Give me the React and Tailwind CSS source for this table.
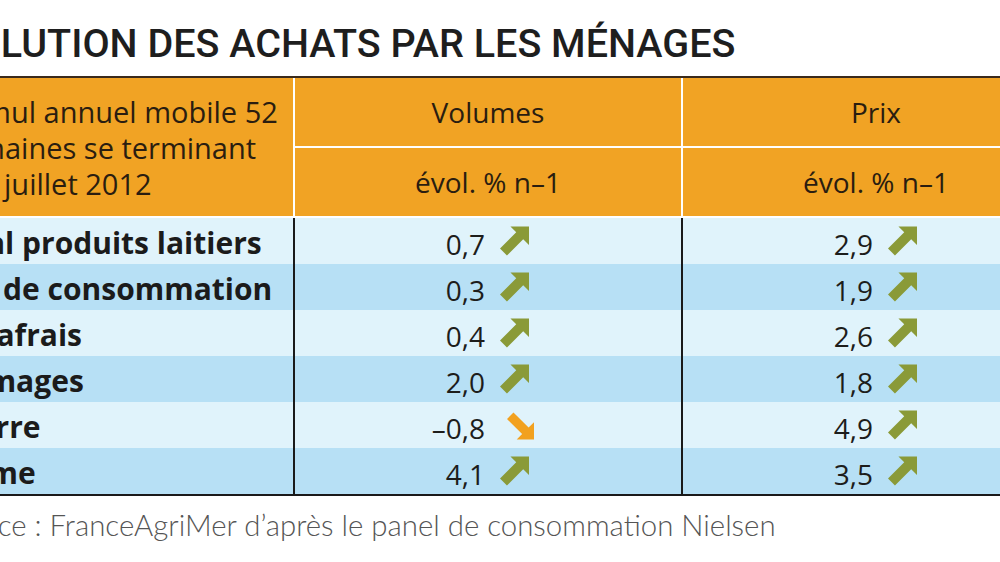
import React from "react";

const rows = [
  { label: "Total produits laitiers", vol: "0,7", volUp: true, prix: "2,9", prixUp: true },
  { label: "Lait de consommation", vol: "0,3", volUp: true, prix: "1,9", prixUp: true },
  { label: "Ultrafrais", vol: "0,4", volUp: true, prix: "2,6", prixUp: true },
  { label: "Fromages", vol: "2,0", volUp: true, prix: "1,8", prixUp: true },
  { label: "Beurre", vol: "–0,8", volUp: false, prix: "4,9", prixUp: true },
  { label: "Crème", vol: "4,1", volUp: true, prix: "3,5", prixUp: true },
];

function Arrow({ up }) {
  // thick diagonal arrow: green up, orange down
  if (up) {
    return (
      <svg viewBox="0 0 100 100" className="w-[29px] h-[30px] shrink-0">
        <polygon
          points="36,0 100,0 100,64 80,44 24,100 0,76 56,20"
          fill="#8a9a38"
        />
      </svg>
    );
  }
  return (
    <svg viewBox="0 0 100 100" className="w-[27px] h-[28px] shrink-0">
      <polygon
        points="36,100 100,100 100,36 80,56 24,0 0,24 56,80"
        fill="#f2a11f"
      />
    </svg>
  );
}

function ValueCell({ value, up, bg }) {
  return (
    <div className={`${bg} flex items-center h-[46px]`}>
      <span className="w-[190px] text-right text-[28px] leading-[46px] pt-[6px] text-[#1d1d1b]">
        {value}
      </span>
      <span className={`${up ? "ml-[15px]" : "ml-[22px] pt-[2px]"} flex items-center`}>
        <Arrow up={up} />
      </span>
    </div>
  );
}

export default function App() {
  return (
    <div
      className="w-[1000px] h-[562px] overflow-hidden bg-white"
      style={{ fontFamily: "'Open Sans', 'Noto Sans', sans-serif" }}
    >
      <h1
        className="ml-[-74px] pt-[21px] text-[39.5px] leading-[46px] font-medium text-[#1e1e1e] whitespace-nowrap"
        style={{ fontFamily: "Roboto, 'Open Sans', sans-serif" }}
      >
        ÉVOLUTION DES ACHATS PAR LES MÉNAGES
      </h1>

      <div className="ml-[-76px] w-[1145px] mt-[9px] border-t-2 border-[#3a2a1c]">
        {/* header */}
        <div className="grid grid-cols-[369px_386px_386px] grid-rows-[68px_68px] gap-[2px] bg-white">
          <div className="row-span-2 bg-[#f1a324] pl-[24px] pt-[2px] flex flex-col justify-center text-[29px] leading-[36px] font-medium text-[#2a1d10] whitespace-nowrap">
            <span>Cumul annuel mobile 52</span>
            <span>semaines se terminant</span>
            <span className="ml-[-10px]">à fin juillet 2012</span>
          </div>
          <div className="bg-[#f1a324] flex items-center justify-center text-[28px] font-medium text-[#2a1d10]">
            Volumes
          </div>
          <div className="bg-[#f1a324] flex items-center justify-center text-[28px] font-medium text-[#2a1d10]">
            Prix
          </div>
          <div className="bg-[#f1a324] flex items-center justify-center text-[28px] font-medium text-[#2a1d10]">
            évol. % n–1
          </div>
          <div className="bg-[#f1a324] flex items-center justify-center text-[28px] font-medium text-[#2a1d10]">
            évol. % n–1
          </div>
        </div>

        {/* body */}
        <div className="border-t-2 border-white border-b-2 border-b-[#1a1a1a] grid grid-cols-[369px_386px_386px] gap-x-[2px] bg-[#1a1a1a]">
          {rows.map((r, i) => {
            const bg = i % 2 === 0 ? "bg-[#e0f3fb]" : "bg-[#b7e0f5]";
            return (
              <React.Fragment key={r.label}>
                <div
                  className={`${bg} h-[46px] pl-[14px] pt-[2px] flex items-center text-[30px] font-bold text-[#1b1b1b] whitespace-nowrap`}
                >
                  {r.label}
                </div>
                <ValueCell value={r.vol} up={r.volUp} bg={bg} />
                <ValueCell value={r.prix} up={r.prixUp} bg={bg} />
              </React.Fragment>
            );
          })}
        </div>
      </div>

      <p
        className="ml-[-60px] mt-[11px] text-[29.4px] leading-[36px] font-light text-[#555555] whitespace-nowrap"
        style={{ fontFamily: "Lato, 'Open Sans', sans-serif" }}
      >
        Source : FranceAgriMer d’après le panel de consommation Nielsen
      </p>
    </div>
  );
}
